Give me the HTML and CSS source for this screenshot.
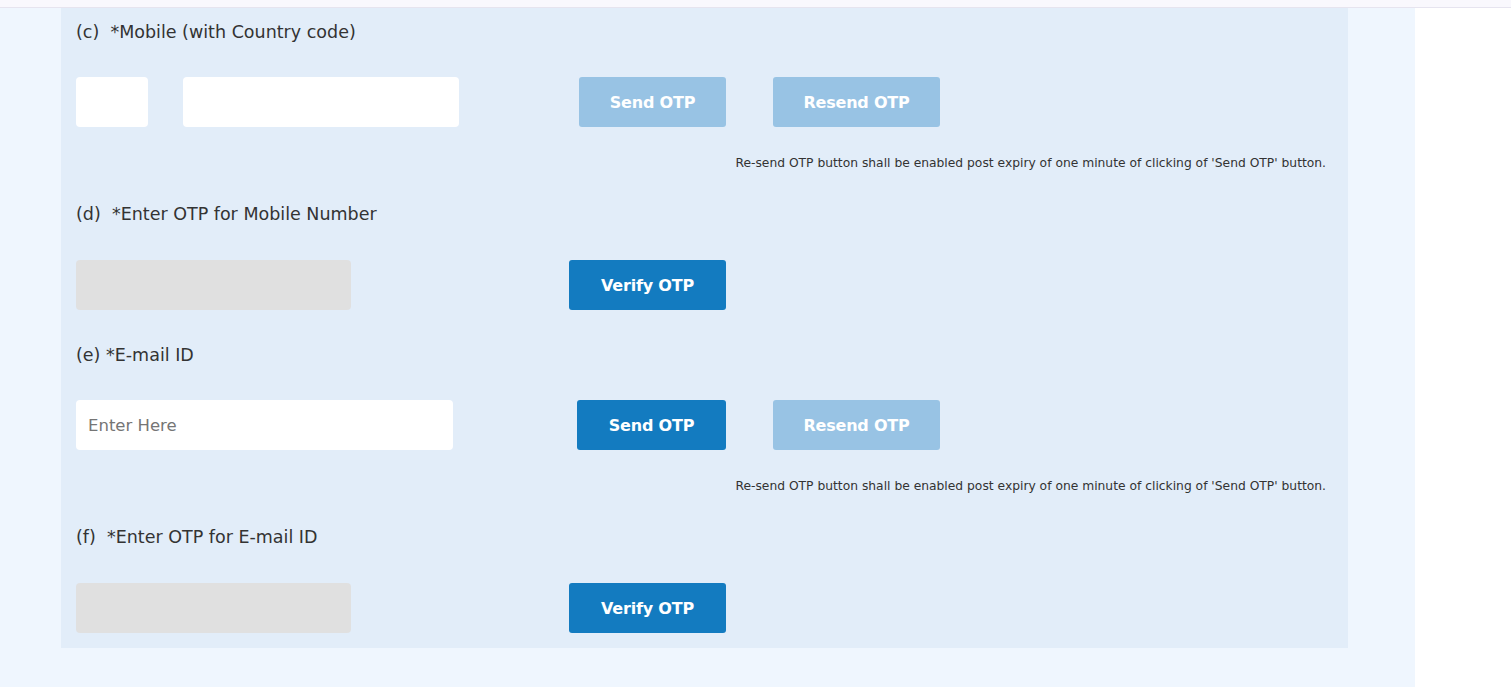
FILE: index.html
```html
<!DOCTYPE html>
<html>
<head>
<meta charset="utf-8">
<link rel="stylesheet" href="styles.css">
</head>
<body>
<div class="topbar"></div>
<div class="page">
  <div class="panel">
    <div class="label lbl-first">(c)&nbsp; *Mobile (with Country code)</div>
    <div class="row">
      <div class="field w-cc"></div>
      <div class="field w-phone ml-35"></div>
      <button class="btn disabled w-send ml-120">Send OTP</button>
      <button class="btn disabled w-resend ml-47">Resend OTP</button>
    </div>
    <div class="note">Re-send OTP button shall be enabled post expiry of one minute of clicking of 'Send OTP' button.</div>

    <div class="label lbl-after-note">(d)&nbsp; *Enter OTP for Mobile Number</div>
    <div class="row">
      <div class="field grey w-otp"></div>
      <button class="btn w-verify ml-218">Verify OTP</button>
    </div>

    <div class="label lbl-after-row">(e) *E-mail ID</div>
    <div class="row">
      <div class="field w-email"><span class="ph">Enter Here</span></div>
      <button class="btn w-send2 ml-124">Send OTP</button>
      <button class="btn disabled w-resend ml-47">Resend OTP</button>
    </div>
    <div class="note">Re-send OTP button shall be enabled post expiry of one minute of clicking of 'Send OTP' button.</div>

    <div class="label lbl-after-note">(f)&nbsp; *Enter OTP for E-mail ID</div>
    <div class="row">
      <div class="field grey w-otp"></div>
      <button class="btn w-verify ml-218">Verify OTP</button>
    </div>
  </div>
</div>
</body>
</html>
```
FILE: styles.css
```css
* { box-sizing: border-box; }
html, body { margin: 0; padding: 0; background: #ffffff; }
body { font-family: "DejaVu Sans", "Open Sans", sans-serif; color: #333333; }

.topbar {
  height: 8px;
  background: #f9f8fd;
  border-bottom: 1px solid #e6e4ef;
}

.page {
  width: 1415px;
  height: 679px;
  background: #eff6fe;
  padding-left: 61px;
}

.panel {
  width: 1287px;
  background: #e2edf9;
  padding: 13px 22px 15px 15px;
}

.label {
  font-size: 17.5px;
  line-height: 22px;
  height: 22px;
  color: #333333;
  white-space: nowrap;
  margin-bottom: 34px;
}
.lbl-first { margin-top: 0; }
.lbl-after-note { margin-top: 32px; margin-bottom: 35px; }
.lbl-after-row { margin-top: 34px; margin-bottom: 34px; }

.row {
  display: flex;
  align-items: stretch;
  height: 50px;
}

.field {
  height: 50px;
  background: #ffffff;
  border-radius: 4px;
  display: flex;
  align-items: center;
  padding-left: 12px;
}
.field.grey { background: #e0e0e0; }
.ph { color: #757575; font-size: 16.5px; }

.w-cc { width: 72px; }
.w-phone { width: 276px; }
.w-otp { width: 275px; }
.w-email { width: 377px; }
.w-send { width: 147px; }
.w-send2 { width: 149px; }
.w-resend { width: 167px; }
.w-verify { width: 157px; }

.ml-35 { margin-left: 35px; }
.ml-120 { margin-left: 120px; }
.ml-47 { margin-left: 47px; }
.ml-218 { margin-left: 218px; }
.ml-124 { margin-left: 124px; }

.btn {
  height: 50px;
  border: none;
  border-radius: 3px;
  background: #137bc0;
  color: #ffffff;
  font-family: "DejaVu Sans", "Open Sans", sans-serif;
  font-weight: 700;
  font-size: 16px;
  letter-spacing: -0.2px;
  padding: 0;
  cursor: pointer;
}
.btn.disabled { background: #98c3e4; }

.note {
  margin-top: 28px;
  font-size: 12.3px;
  line-height: 16px;
  height: 16px;
  text-align: right;
  color: #333333;
  white-space: nowrap;
}
```
